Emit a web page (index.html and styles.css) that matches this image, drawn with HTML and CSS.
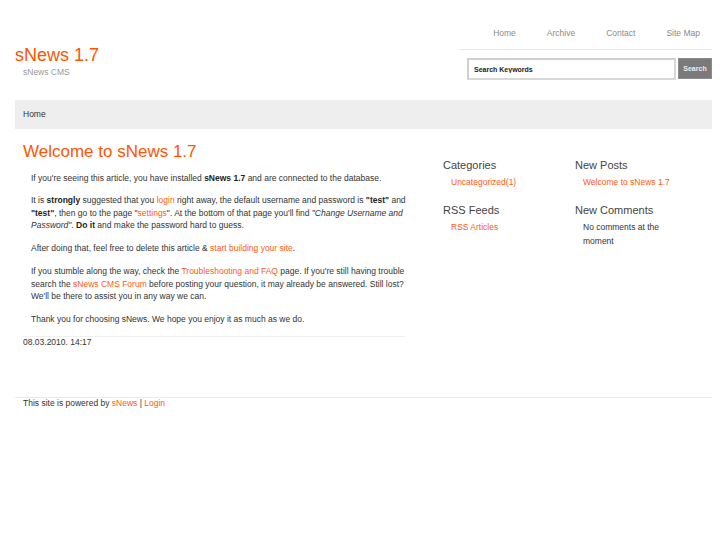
FILE: index.html
```html
<!DOCTYPE html>
<html lang="en">
<head>
<meta charset="utf-8">
<title>sNews 1.7</title>
<link rel="stylesheet" href="styles.css">
</head>
<body>
<div class="page">
  <header class="header">
    <div class="brand">
      <h1 class="site-title">sNews 1.7</h1>
      <p class="tagline">sNews CMS</p>
    </div>
    <div class="header-right">
      <nav class="topnav">
        <a href="#">Home</a>
        <a href="#">Archive</a>
        <a href="#">Contact</a>
        <a href="#">Site Map</a>
      </nav>
      <form class="search">
        <input class="search-input" type="text" value="Search Keywords">
        <button class="search-btn" type="button">Search</button>
      </form>
    </div>
  </header>

  <div class="crumb">Home</div>

  <div class="content">
    <main class="main">
      <h2 class="post-title">Welcome to sNews 1.7</h2>
      <div class="post-body">
        <p>If you're seeing this article, you have installed <strong>sNews 1.7</strong> and are connected to the database.</p>
        <p>It is <strong>strongly</strong> suggested that you <a href="#">login</a> right away, the default username and password is <strong>"test"</strong> and <strong>"test"</strong>, then go to the page "<a href="#">settings</a>". At the bottom of that page you'll find <em>"Change Username and Password"</em>. <strong>Do it</strong> and make the password hard to guess.</p>
        <p>After doing that, feel free to delete this article &amp; <a href="#">start building your site</a>.</p>
        <p>If you stumble along the way, check the <a href="#">Troubleshooting and FAQ</a> page. If you're still having trouble search the <a href="#">sNews CMS Forum</a> before posting your question, it may already be answered. Still lost? We'll be there to assist you in any way we can.</p>
        <p>Thank you for choosing sNews. We hope you enjoy it as much as we do.</p>
      </div>
      <div class="post-date">08.03.2010. 14:17</div>
    </main>

    <aside class="sidebar">
      <section class="box">
        <h3>Categories</h3>
        <ul><li><a href="#">Uncategorized(1)</a></li></ul>
      </section>
      <section class="box">
        <h3>New Posts</h3>
        <ul><li><a href="#">Welcome to sNews 1.7</a></li></ul>
      </section>
      <section class="box">
        <h3>RSS Feeds</h3>
        <ul><li><a href="#">RSS Articles</a></li></ul>
      </section>
      <section class="box">
        <h3>New Comments</h3>
        <ul><li>No comments at the moment</li></ul>
      </section>
    </aside>
  </div>

  <footer class="footer">
    This site is powered by <a href="#">sNews</a> | <a href="#">Login</a>
  </footer>
</div>
</body>
</html>
```

FILE: styles.css
```css
* { box-sizing: border-box; }

body {
  margin: 0;
  background: #fff;
  color: #333;
  font-family: "Liberation Sans", Arial, sans-serif;
  font-size: 8.5px;
}

a { color: #ff5a14; text-decoration: none; }

.page { padding: 0 15px; }

/* header */
.header {
  display: flex;
  justify-content: space-between;
  height: 100px;
}

.brand { padding-top: 45px; }

.site-title {
  margin: 0;
  font-size: 18px;
  line-height: 21px;
  font-weight: normal;
  color: #ff5500;
}

.tagline {
  margin: 0 0 0 8px;
  font-size: 8.5px;
  line-height: 12px;
  color: #999;
}

.header-right { width: 253px; }

.topnav {
  display: flex;
  justify-content: flex-end;
  gap: 31px;
  margin-top: 27px;
  padding: 0 12px 10px 0;
  border-bottom: 1px solid #efe6de;
  line-height: 12px;
}

.topnav a { color: #8a8a8a; }

.search {
  display: flex;
  gap: 2px;
  margin: 8px 0 0 8px;
}

.search-input {
  width: 209px;
  height: 22px;
  margin: 0;
  padding: 0 0 0 5px;
  border: 2px solid #d8d8d8;
  border-top-color: #cfcfcf;
  border-left-color: #cfcfcf;
  font-family: "Liberation Sans", Arial, sans-serif;
  font-size: 7px;
  font-weight: bold;
  color: #222;
  outline: none;
}

.search-btn {
  width: 34px;
  height: 21px;
  margin: 0;
  padding: 0;
  border: 1px solid #8c8c8c;
  background: #7a7a7a;
  color: #eee;
  font-family: "Liberation Sans", Arial, sans-serif;
  font-size: 7px;
  font-weight: bold;
}

/* crumb bar */
.crumb {
  height: 29px;
  line-height: 29px;
  padding: 0 8px;
  background: #eee;
  color: #333;
}

/* content */
.content { display: flex; }

.main {
  width: 398px;
  padding: 13px 8px 0;
  margin-bottom: 49px;
}

.post-title {
  margin: 0 0 9.5px;
  font-size: 17px;
  line-height: 20px;
  font-weight: normal;
  color: #ff5500;
}

.post-body p {
  margin: 0 -6px 10.4px 0;
  padding-left: 8px;
  line-height: 12.5px;
}

.post-body strong { color: #222; }

.post-date {
  margin-top: 1px;
  border-top: 1px solid #efefef;
  line-height: 11px;
}

.sidebar {
  flex: 1;
  padding: 29px 0 0 30px;
  display: grid;
  grid-template-columns: 132px 1fr;
  align-content: start;
}

.box h3 {
  margin: 0;
  font-size: 11px;
  line-height: 14px;
  font-weight: normal;
  color: #444;
}

.box ul {
  list-style: none;
  margin: 3px 0 13.5px;
  padding: 0 38px 0 8px;
  line-height: 14.4px;
}

/* footer */
.footer {
  border-top: 1px solid #f3e9e1;
  padding: 0 8px;
  line-height: 11px;
}
```
